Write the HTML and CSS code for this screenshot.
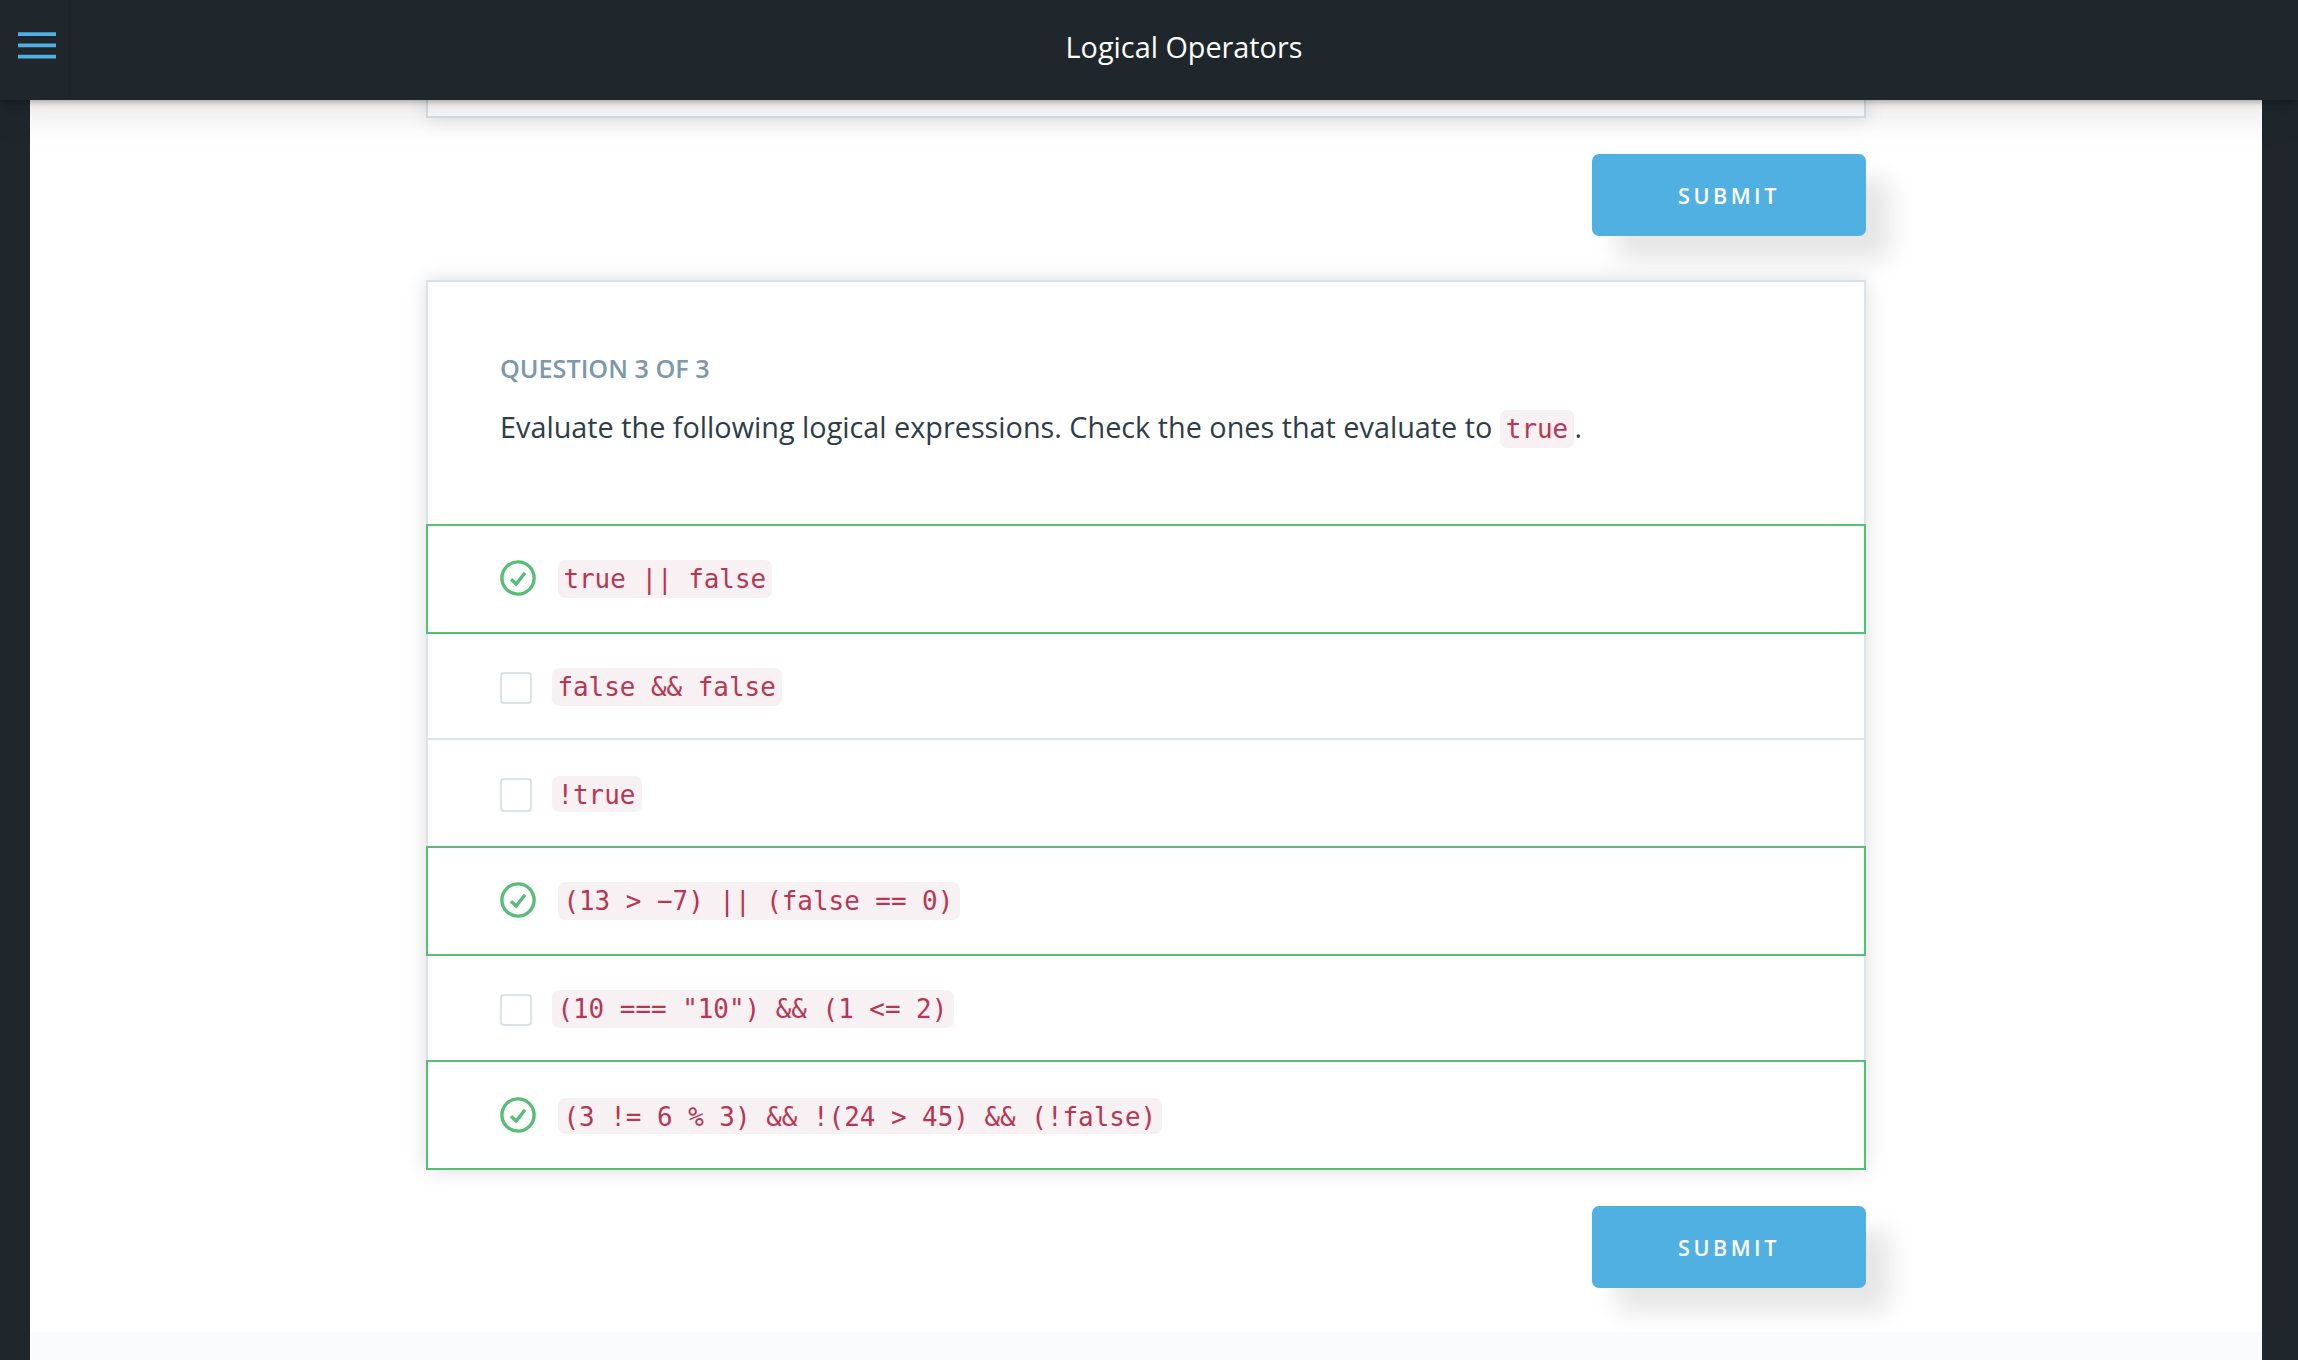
FILE: index.html
```html
<!DOCTYPE html>
<html lang="en">
<head>
<meta charset="utf-8">
<title>Logical Operators</title>
<link rel="stylesheet" href="styles.css">
</head>
<body>
<header class="topbar">
  <button class="menu" aria-label="Open menu">
    <svg width="38" height="28" viewBox="0 0 38 28"><path d="M0 2.1H38M0 13.3H38M0 24.7H38" stroke="#4fb0e1" stroke-width="3.8"/></svg>
  </button>
  <h1 class="title">Logical Operators</h1>
</header>
<main class="page">
  <div class="column">
    <section class="card card-previous"></section>
    <div class="actions"><button class="submit">SUBMIT</button></div>
    <section class="card">
      <div class="prompt">
        <h2 class="count">QUESTION 3 OF 3</h2>
        <p class="question">Evaluate the following logical expressions. Check the ones that evaluate to <code>true</code>.</p>
      </div>
      <ul class="options">
        <li class="option correct"><svg class="tick" viewBox="0 0 36 36"><circle cx="18" cy="18" r="16.1"/><path d="M11 19.2L16.2 24L25 12.8"/></svg><code>true || false</code></li>
        <li class="option lined"><span class="box"></span><code>false &amp;&amp; false</code></li>
        <li class="option roomy"><span class="box tall"></span><code class="short">!true</code></li>
        <li class="option correct"><svg class="tick" viewBox="0 0 36 36"><circle cx="18" cy="18" r="16.1"/><path d="M11 19.2L16.2 24L25 12.8"/></svg><code>(13 &gt; −7) || (false == 0)</code></li>
        <li class="option"><span class="box"></span><code>(10 === "10") &amp;&amp; (1 &lt;= 2)</code></li>
        <li class="option correct last"><svg class="tick" viewBox="0 0 36 36"><circle cx="18" cy="18" r="16.1"/><path d="M11 19.2L16.2 24L25 12.8"/></svg><code class="short">(3 != 6 % 3) &amp;&amp; !(24 &gt; 45) &amp;&amp; (!false)</code></li>
      </ul>
    </section>
    <div class="actions"><button class="submit">SUBMIT</button></div>
  </div>
  <footer class="footer"></footer>
</main>
</body>
</html>
```
FILE: styles.css
```css
* { box-sizing: border-box; }

body {
  margin: 0;
  height: 1360px;
  overflow: hidden;
  display: flex;
  flex-direction: column;
  background: #1f272d;
  font-family: "Open Sans", sans-serif;
  color: #2e3d49;
}

button {
  border: 0;
  padding: 0;
  font: inherit;
}

.topbar {
  flex: none;
  height: 100px;
  display: grid;
  grid-template-columns: 70px 1fr;
  background: #1f272d;
  box-shadow: 0 0 8px rgba(0, 0, 0, .45), 0 10px 40px rgba(0, 0, 0, .12);
  z-index: 1;
}

.menu {
  background: none;
  border-right: 1px solid #1c242a;
  padding: 32px 0 0 18px;
  display: flex;
  align-items: flex-start;
}

.title {
  margin: 0;
  padding-top: 27px;
  font-size: 28.8px;
  line-height: 39px;
  font-weight: 400;
  color: #fff;
  text-align: center;
}

.page {
  flex: 1;
  margin: 0 36px 0 30px;
  background: #fff;
  display: flex;
  flex-direction: column;
}

.column {
  width: 1440px;
  height: 1232px;
  margin-left: 396px;
}

.card {
  background: #fff;
  border: 2px solid #dbe2e8;
  box-shadow: 0 0 20px rgba(0, 0, 0, .14);
}

.card-previous {
  height: 18px;
  border-top: 0;
}

.actions {
  display: flex;
  justify-content: flex-end;
  padding: 36px 0 44px;
}

.submit {
  width: 274px;
  height: 82px;
  padding-top: 1px;
  border-radius: 7px;
  background: #4fb0e1;
  box-shadow: 24px 24px 24px rgba(0, 0, 0, .1);
  color: #fff;
  font-size: 21.6px;
  font-weight: 600;
  letter-spacing: 3.5px;
}

.prompt {
  height: 242px;
  padding: 69px 72px 0;
}

.count {
  margin: 0;
  font-size: 25.2px;
  line-height: 34px;
  font-weight: 600;
  color: #7d97ad;
}

.question {
  margin: 18px 0 0;
  font-size: 28.8px;
  line-height: 47px;
}

.question code { margin-left: .6px; }

code {
  display: inline-block;
  height: 38px;
  padding: 0 6.2px 0 5.4px;
  border-radius: 7px;
  background: #f8f1f4;
  color: #b93551;
  font-family: "DejaVu Sans Mono", monospace;
  font-size: 25.92px;
  line-height: 38px;
  white-space: pre;
}

code.short { height: 36px; }

.options {
  list-style: none;
  margin: 0 -2px -2px;
  padding: 0;
}

.option {
  display: flex;
  align-items: flex-start;
  height: 104px;
  padding: 34px 74px 0;
}

.lined {
  height: 106px;
  margin: 0 2px;
  padding-left: 72px;
  border-bottom: 2px solid #dbe2e8;
}

.roomy {
  height: 106px;
  padding-top: 36px;
}

.correct {
  height: 110px;
  padding: 34px 72px 0;
  border: 2px solid #58bd75;
}

.last code { margin-top: 2px; }
.last .tick { margin-top: 1px; }

.box {
  width: 32px;
  height: 32px;
  margin: 4px 20px 0 0;
  border: 2px solid #dbe2e8;
  border-radius: 4px;
}

.box.tall {
  height: 34px;
  margin-top: 2px;
}

.tick {
  width: 36px;
  height: 36px;
  margin: 0 22px 0 0;
  fill: none;
  stroke: #58bd75;
  stroke-width: 3.4;
}

.footer {
  flex: 1;
  background: #fafbfd;
}
```
